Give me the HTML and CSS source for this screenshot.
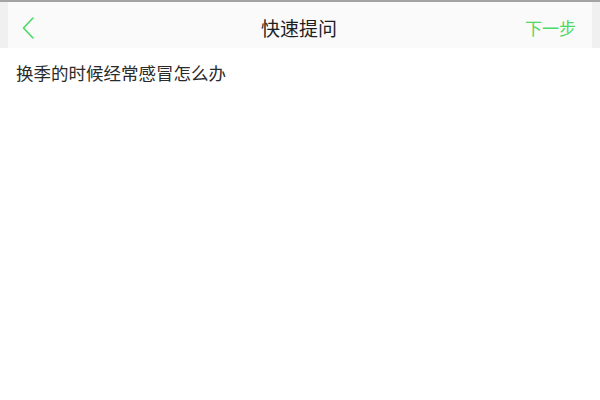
FILE: index.html
```html
<!DOCTYPE html>
<html lang="zh">
<head>
<meta charset="utf-8">
<title>快速提问</title>
<link rel="stylesheet" href="styles.css">
</head>
<body>
<div class="topline"></div>
<header class="nav-wrap">
  <div class="nav">
    <a class="back" aria-label="返回">
      <svg width="12" height="22" viewBox="0 0 12 22"><path d="M11 1 L1.5 11 L11 21" fill="none" stroke="#4cd964" stroke-width="1.6" stroke-linecap="round" stroke-linejoin="round"/></svg>
    </a>
    <h1 class="title">快速提问</h1>
    <a class="next">下一步</a>
  </div>
</header>
<main class="content">
  <p class="question">换季的时候经常感冒怎么办</p>
</main>
</body>
</html>
```
FILE: styles.css
```css
html, body {
  margin: 0;
  padding: 0;
  background: #ffffff;
  font-family: "Noto Sans CJK SC", "Noto Sans", sans-serif;
}
.topline {
  height: 2px;
  background: #a3a3a3;
}
.nav-wrap {
  background: #f0f0f0;
  padding: 0 8px;
}
.nav {
  height: 41px;
  padding-top: 5px;
  background: #fafafa;
  display: flex;
  align-items: center;
  justify-content: space-between;
}
.back {
  display: flex;
  align-items: center;
  padding-left: 14px;
  width: 80px;
}
.title {
  margin: 0;
  font-size: 19px;
  font-weight: normal;
  color: #1f1f1f;
}
.next {
  width: 80px;
  text-align: right;
  padding-right: 16px;
  font-size: 17px;
  color: #4cd964;
}
.content {
  padding: 0 16px;
}
.question {
  margin: 13px 0 0;
  font-size: 17.5px;
  color: #2b2b2b;
  line-height: 24px;
}
```
